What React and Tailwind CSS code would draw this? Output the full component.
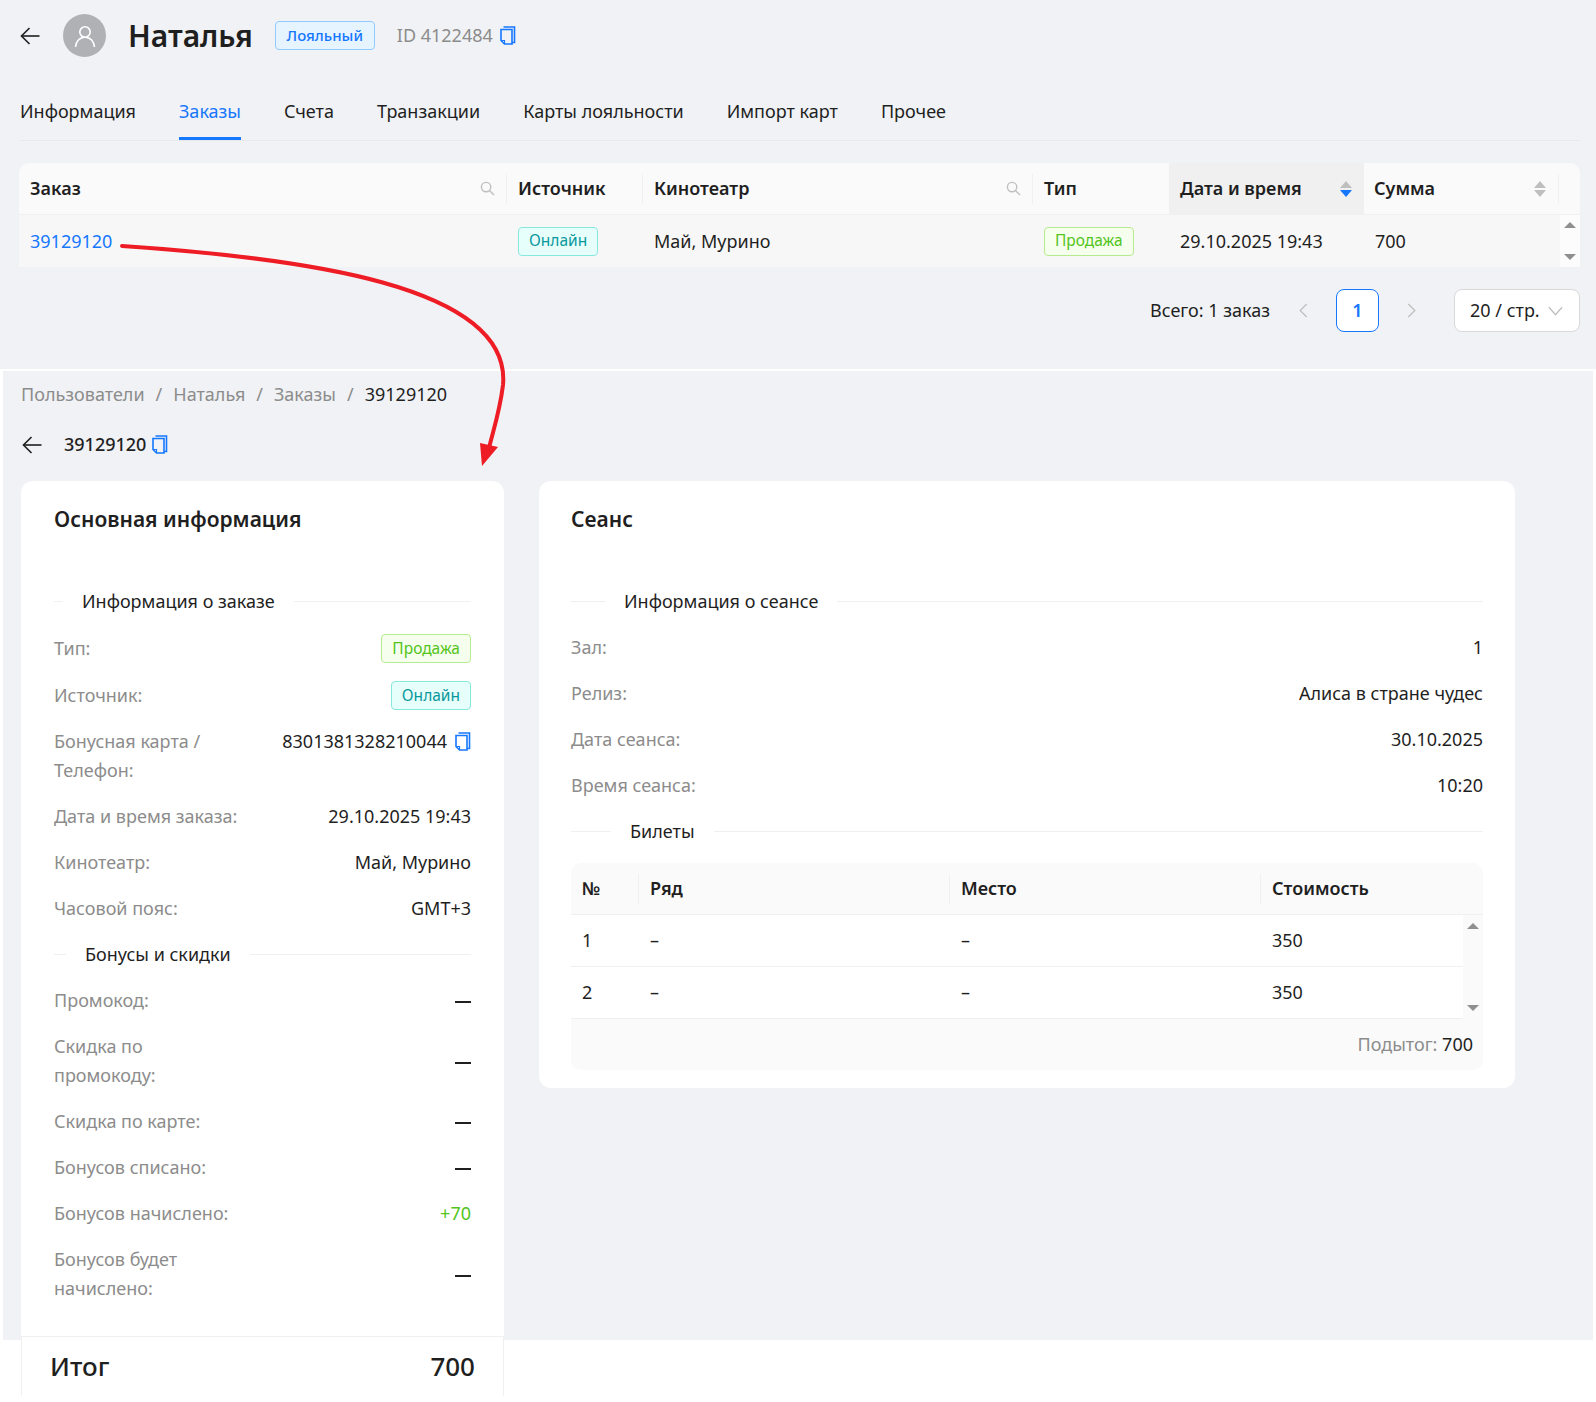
const font = { fontFamily: '"Noto Sans", "Open Sans", sans-serif' }

function CopyIcon({ className = 'w-[16px] h-[19px]' }) {
  return (
    <svg viewBox="0 0 16 19" className={className} fill="none" stroke="#1677ff" strokeWidth="1.6">
      <path d="M3.5 1h11v15.5H12" />
      <path d="M1 3.5h11V18H4.5L1 14.5z" />
      <path d="M1.5 14.5h3V17.5" strokeWidth="1.2" />
    </svg>
  )
}

function BackArrow({ className = 'w-[20px] h-[18px]' }) {
  return (
    <svg viewBox="0 0 20 18" className={className} fill="none" stroke="#1f1f1f" strokeWidth="1.6">
      <path d="M19.5 9H1.5" />
      <path d="M9.5 1L1.5 9l8 8" />
    </svg>
  )
}

function SearchIcon() {
  return (
    <svg viewBox="0 0 16 16" className="w-[15px] h-[15px]" fill="none" stroke="#bfbfbf" strokeWidth="1.5">
      <circle cx="6.5" cy="6.5" r="5" />
      <path d="M10.3 10.3L15 15" />
    </svg>
  )
}

function SortIcon({ active }) {
  return (
    <div className="flex flex-col gap-[2px]">
      <div className="w-0 h-0 border-x-[6px] border-x-transparent border-b-[7px] border-b-[#bfbfbf]" />
      <div className={active
        ? 'w-0 h-0 border-x-[6px] border-x-transparent border-t-[7px] border-t-[#1677ff]'
        : 'w-0 h-0 border-x-[6px] border-x-transparent border-t-[7px] border-t-[#bfbfbf]'} />
    </div>
  )
}

function ScrollBar({ className }) {
  return (
    <div className={`flex flex-col justify-between items-center ${className}`}>
      <div className="w-0 h-0 border-x-[6px] border-x-transparent border-b-[6px] border-b-[#8f8f8f]" />
      <div className="w-0 h-0 border-x-[6px] border-x-transparent border-t-[6px] border-t-[#8f8f8f]" />
    </div>
  )
}

function Tag({ color, children }) {
  const styles = color === 'green'
    ? 'bg-[#f6ffed] border-[#b7eb8f] text-[#52c41a]'
    : 'bg-[#e6fffb] border-[#87e8de] text-[#08979c]'
  return (
    <span className={`inline-flex items-center h-[29px] px-[10px] border rounded-[4px] text-[15.5px] ${styles}`}>
      {children}
    </span>
  )
}

function Divider({ left, children }) {
  return (
    <div className="flex items-center h-[29px]">
      <div className="h-px bg-[#f0f0f0]" style={{ width: left }} />
      <span className="px-[19px] text-[18px] text-[#1f1f1f] leading-[29px]">{children}</span>
      <div className="h-px bg-[#f0f0f0] flex-1" />
    </div>
  )
}

function Row({ label, children, labelClass = '' }) {
  return (
    <div className="flex justify-between items-center gap-6 text-[18px] leading-[29px]">
      <div className={`text-[#8c8c8c] ${labelClass}`}>{label}</div>
      <div className="text-[#1f1f1f] text-right shrink-0">{children}</div>
    </div>
  )
}

const Dash = () => <span className="inline-block w-[16px] h-[2px] bg-[#1f1f1f] align-middle" />

function Th({ className, children }) {
  return (
    <div className={`flex items-center justify-between h-full font-semibold text-[18px] text-[#1f1f1f] ${className}`}>
      {children}
    </div>
  )
}

function Sep() {
  return <div className="w-px h-[30px] bg-[#f0f0f0] shrink-0" />
}

function OrdersTable() {
  return (
    <div className="mx-[19px] mt-[22px] w-[1561px]">
      <div className="flex items-center h-[52px] bg-[#fafafa] rounded-t-[10px] border-b border-[#f0f0f0]">
        <Th className="w-[487px] pl-[11px] pr-[11px]">Заказ <SearchIcon /></Th>
        <Sep />
        <Th className="w-[135px] pl-[11px]">Источник</Th>
        <Sep />
        <Th className="w-[389px] pl-[11px] pr-[11px]">Кинотеатр <SearchIcon /></Th>
        <Sep />
        <Th className="w-[136px] pl-[11px]">Тип</Th>
        <Th className="w-[195px] pl-[11px] pr-[12px] bg-[#f0f0f0]">Дата и время <SortIcon active /></Th>
        <Th className="w-[194px] pl-[10px] pr-[12px]">Сумма <SortIcon /></Th>
        <Sep />
      </div>
      <div className="flex h-[52px] text-[18px] text-[#1f1f1f]">
        <div className="flex items-center flex-1 bg-[#f7f7f7]">
          <div className="w-[488px] pl-[11px] text-[#1677ff]">39129120</div>
          <div className="w-[136px] pl-[11px]"><Tag color="cyan">Онлайн</Tag></div>
          <div className="w-[390px] pl-[11px]">Май, Мурино</div>
          <div className="w-[137px] pl-[11px]"><Tag color="green">Продажа</Tag></div>
          <div className="w-[195px] pl-[10px]">29.10.2025 19:43</div>
          <div className="pl-[10px]">700</div>
        </div>
        <ScrollBar className="w-[20px] py-[7px] bg-[#fcfcfc]" />
      </div>
    </div>
  )
}

function Pagination() {
  return (
    <div className="flex items-center justify-end mt-[22px] pr-[16px] text-[18px] text-[#1f1f1f]">
      <span>Всего: 1 заказ</span>
      <svg viewBox="0 0 10 16" className="ml-[28px] w-[10px] h-[15px]" fill="none" stroke="#bfbfbf" strokeWidth="1.4">
        <path d="M9 1L2 8l7 7" />
      </svg>
      <div className="ml-[28px] flex items-center justify-center w-[43px] h-[43px] bg-white border border-[#1677ff] rounded-[8px] text-[#1677ff] font-semibold">1</div>
      <svg viewBox="0 0 10 16" className="ml-[28px] w-[10px] h-[15px]" fill="none" stroke="#bfbfbf" strokeWidth="1.4">
        <path d="M1 1l7 7-7 7" />
      </svg>
      <div className="ml-[37px] flex items-center justify-between w-[126px] h-[43px] pl-[15px] pr-[16px] bg-white border border-[#d9d9d9] rounded-[8px]">
        <span>20 / стр.</span>
        <svg viewBox="0 0 16 10" className="w-[15px] h-[10px]" fill="none" stroke="#bfbfbf" strokeWidth="1.4">
          <path d="M1 1l7 8 7-8" />
        </svg>
      </div>
    </div>
  )
}

function MainInfoCard() {
  return (
    <div className="w-[483px] shrink-0 bg-white rounded-t-[12px]">
      <div className="px-[33px] pt-[22px] pb-[33px] h-[855px]">
        <h2 className="text-[21px] font-semibold leading-[32px] text-[#1f1f1f]">Основная информация</h2>
        <div className="mt-[52px]"><Divider left={9}>Информация о заказе</Divider></div>
        <div className="flex flex-col gap-[17px] mt-[17px]">
          <Row label="Тип:"><Tag color="green">Продажа</Tag></Row>
          <Row label="Источник:"><Tag color="cyan">Онлайн</Tag></Row>
          <Row label={<>Бонусная карта /<br />Телефон:</>}>
            <div className="flex items-center gap-[8px] -mt-[29px]">8301381328210044 <CopyIcon /></div>
          </Row>
          <Row label="Дата и время заказа:">29.10.2025 19:43</Row>
          <Row label="Кинотеатр:">Май, Мурино</Row>
          <Row label="Часовой пояс:">GMT+3</Row>
        </div>
        <div className="mt-[17px]"><Divider left={12}>Бонусы и скидки</Divider></div>
        <div className="flex flex-col gap-[17px] mt-[17px]">
          <Row label="Промокод:"><Dash /></Row>
          <Row label={<>Скидка по<br />промокоду:</>}><Dash /></Row>
          <Row label="Скидка по карте:"><Dash /></Row>
          <Row label="Бонусов списано:"><Dash /></Row>
          <Row label="Бонусов начислено:"><span className="text-[#52c41a]">+70</span></Row>
          <Row label={<>Бонусов будет<br />начислено:</>}><Dash /></Row>
        </div>
      </div>
      <div className="flex justify-between items-center h-[60px] px-[28px] border-x border-t border-[#f0f0f0] text-[26px] font-medium text-[#1f1f1f]">
        <span>Итог</span>
        <span>700</span>
      </div>
    </div>
  )
}

function TicketsTable() {
  const rows = [['1', '350'], ['2', '350']]
  return (
    <div className="mt-[17px] rounded-[10px] bg-[#fafafa] text-[18px] text-[#1f1f1f]">
      <div className="flex items-center h-[52px] border-b border-[#f0f0f0] font-semibold">
        <div className="w-[67px] pl-[11px] flex-none">№</div>
        <Sep />
        <div className="w-[310px] pl-[11px]">Ряд</div>
        <Sep />
        <div className="w-[310px] pl-[11px]">Место</div>
        <Sep />
        <div className="pl-[11px]">Стоимость</div>
      </div>
      <div className="flex bg-white">
        <div className="flex-1">
          {rows.map(([n, price]) => (
            <div key={n} className="flex items-center h-[52px] border-b border-[#f0f0f0]">
              <div className="w-[67px] pl-[11px]">{n}</div>
              <div className="w-[311px] pl-[12px]">–</div>
              <div className="w-[311px] pl-[12px]">–</div>
              <div className="pl-[12px]">{price}</div>
            </div>
          ))}
        </div>
        <ScrollBar className="w-[20px] py-[8px] bg-[#fafafa]" />
      </div>
      <div className="flex items-center justify-end h-[51px] pr-[10px]">
        <span className="text-[#8c8c8c]">Подытог:&nbsp;</span>700
      </div>
    </div>
  )
}

function SessionCard() {
  return (
    <div className="w-[976px] h-[607px] bg-white rounded-[12px] px-[32px] pt-[22px]">
      <h2 className="text-[21px] font-semibold leading-[32px] text-[#1f1f1f]">Сеанс</h2>
      <div className="mt-[52px]"><Divider left={34}>Информация о сеансе</Divider></div>
      <div className="flex flex-col gap-[17px] mt-[17px]">
        <Row label="Зал:">1</Row>
        <Row label="Релиз:">Алиса в стране чудес</Row>
        <Row label="Дата сеанса:">30.10.2025</Row>
        <Row label="Время сеанса:">10:20</Row>
      </div>
      <div className="mt-[17px]"><Divider left={40}>Билеты</Divider></div>
      <TicketsTable />
    </div>
  )
}

export default function App() {
  const tabs = ['Информация', 'Заказы', 'Счета', 'Транзакции', 'Карты лояльности', 'Импорт карт', 'Прочее']
  return (
    <div className="relative w-[1596px] h-[1402px] overflow-hidden bg-white" style={font}>
      <div className="h-[369px] bg-[#f0f2f5]">
        <div className="flex items-center h-[43px] pt-[0px] translate-y-[14px] pl-[20px]">
          <BackArrow />
          <div className="ml-[23px] flex items-center justify-center w-[43px] h-[43px] rounded-full bg-[#b0b1b5]">
            <svg viewBox="0 0 24 24" className="w-[24px] h-[24px]" fill="none" stroke="#fff" strokeWidth="1.6">
              <circle cx="12" cy="8" r="5.2" />
              <path d="M2.5 23c.5-5.5 4-9.8 9.5-9.8s9 4.3 9.5 9.8" />
            </svg>
          </div>
          <h1 className="ml-[22px] text-[30px] font-semibold text-[#1f1f1f]">Наталья</h1>
          <span className="ml-[22px] flex items-center justify-center w-[100px] h-[29px] bg-[#e6f4ff] border border-[#91caff] rounded-[4px] text-[15px] font-medium text-[#1677ff]">Лояльный</span>
          <span className="ml-[22px] text-[18px] text-[#8c8c8c]">ID 4122484</span>
          <div className="ml-[7px]"><CopyIcon /></div>
        </div>
        <div className="flex gap-[43px] mx-[20px] mt-[14px] pt-[33px] border-b border-[#e8e9ec] h-[84px] w-[1560px] text-[18px] text-[#1f1f1f]">
          {tabs.map(t => (
            <div key={t} className={t === 'Заказы'
              ? 'h-[50px] pt-[8px] text-[#1677ff] border-b-[3px] border-[#1677ff]'
              : 'h-[50px] pt-[8px]'}>{t}</div>
          ))}
        </div>
        <OrdersTable />
        <Pagination />
      </div>

      <div className="ml-[1px] w-[1594px] h-[971px] bg-[#f0f2f5] border-t-[2px] border-x-[2px] border-white">
        <div className="pl-[18px] pt-[9px] flex gap-[11px] text-[18px] leading-[29px] text-[#8c8c8c]">
          <span>Пользователи</span><span>/</span>
          <span>Наталья</span><span>/</span>
          <span>Заказы</span><span>/</span>
          <span className="text-[#1f1f1f]">39129120</span>
        </div>
        <div className="flex items-center pl-[19px] mt-[21px] h-[29px] text-[18px] font-medium text-[#1f1f1f]">
          <BackArrow />
          <span className="ml-[22px]">39129120</span>
          <div className="ml-[6px]"><CopyIcon /></div>
        </div>
        <div className="flex gap-[35px] pl-[18px] mt-[22px]">
          <MainInfoCard />
          <SessionCard />
        </div>
      </div>

      <svg className="absolute left-0 top-0 pointer-events-none" width="1596" height="1402" fill="none">
        <path d="M122 246C300 258 512 285 503 385C500 410 494 428 489 448" stroke="#ee1c25" strokeWidth="4" strokeLinecap="round" />
        <path d="M482 466L480 443L498 447Z" fill="#ee1c25" />
      </svg>
    </div>
  )
}
